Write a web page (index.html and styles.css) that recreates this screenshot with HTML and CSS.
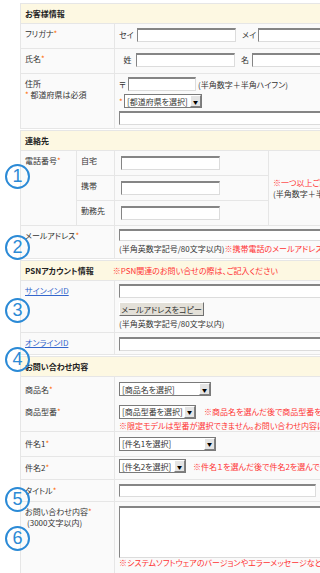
FILE: index.html
```html
<!DOCTYPE html>
<html lang="ja">
<head>
    <meta charset="UTF-8">
    <meta name="viewport" content="width=device-width, initial-scale=1.0">
    <title>お問い合わせフォーム</title>
    <link rel="stylesheet" href="styles.css">
</head>
<body>
<div class="page">

    <table class="form">
        <colgroup><col class="c-label"><col></colgroup>
        <tr class="head"><th colspan="2">お客様情報</th></tr>
        <tr class="r25">
            <td class="label">フリガナ<span class="req">*</span></td>
            <td class="value mid">
                <div class="line">
                    <span class="pre w18">セイ</span><span class="field w99"></span>
                    <span class="pre w16 gap">メイ</span><span class="field w99"></span>
                </div>
            </td>
        </tr>
        <tr class="r25">
            <td class="label">氏名<span class="req">*</span></td>
            <td class="value mid">
                <div class="line">
                    <span class="pre w17 center">姓</span><span class="field w99"></span>
                    <span class="pre w11 gap">名</span><span class="field w99"></span>
                </div>
            </td>
        </tr>
        <tr class="r55">
            <td class="label">住所<br><span class="req">*</span> 都道府県は必須</td>
            <td class="value top">
                <div class="line">
                    <span class="pre w9">〒</span><span class="field w68"></span>
                    <span class="note">(半角数字＋半角ハイフン)</span>
                </div>
                <div class="line">
                    <span class="req pre w5">*</span>
                    <span class="select w78">[都道府県を選択]<span class="arrow">▼</span></span>
                </div>
                <div class="line">
                    <span class="field w260"></span>
                </div>
            </td>
        </tr>
    </table>

    <table class="form">
        <colgroup><col class="c-tel"><col class="c-sub"><col class="c-in"><col></colgroup>
        <tr class="head"><th colspan="4">連絡先</th></tr>
        <tr class="r25">
            <td class="label" rowspan="3">電話番号<span class="req">*</span></td>
            <td class="label">自宅</td>
            <td class="value mid"><span class="field w99 ml2"></span></td>
            <td class="value mid" rowspan="3">
                <span class="red">※一つ以上ご記入ください</span><br>
                (半角数字＋半角ハイフン)
            </td>
        </tr>
        <tr class="r25">
            <td class="label">携帯</td>
            <td class="value mid"><span class="field w99 ml2"></span></td>
        </tr>
        <tr class="r25">
            <td class="label">勤務先</td>
            <td class="value mid"><span class="field w99 ml2"></span></td>
        </tr>
        <tr class="r33">
            <td class="label" colspan="2">メールアドレス<span class="req">*</span></td>
            <td class="value top" colspan="2">
                <div class="line"><span class="field w260 h12"></span></div>
                <div class="line txt">(半角英数字記号/80文字以内) <span class="red">※携帯電話のメールアドレスはご利用いただけません</span></div>
            </td>
        </tr>
    </table>

    <table class="form">
        <colgroup><col class="c-label"><col></colgroup>
        <tr class="head"><th colspan="2">PSNアカウント情報<span class="red head-note">※PSN関連のお問い合せの際は、ご記入ください</span></th></tr>
        <tr class="r52">
            <td class="label"><a href="#" class="link">サインインID</a></td>
            <td class="value top">
                <div class="line"><span class="field w260"></span></div>
                <div class="line"><button class="copy-btn" type="button">メールアドレスをコピー</button></div>
                <div class="line txt">(半角英数字記号/80文字以内)</div>
            </td>
        </tr>
        <tr class="r22">
            <td class="label"><a href="#" class="link">オンラインID</a></td>
            <td class="value mid"><span class="field w260"></span></td>
        </tr>
    </table>

    <table class="form">
        <colgroup><col class="c-label"><col></colgroup>
        <tr class="head"><th colspan="2">お問い合わせ内容</th></tr>
        <tr class="r25 open">
            <td class="label mid">商品名<span class="req">*</span></td>
            <td class="value mid"><span class="select w92">[商品名を選択]<span class="arrow">▼</span></span></td>
        </tr>
        <tr class="r27">
            <td class="label">商品型番<span class="req">*</span></td>
            <td class="value top">
                <div class="line">
                    <span class="select w77">[商品型番を選択]<span class="arrow">▼</span></span>
                    <span class="red ml8">※商品名を選んだ後で商品型番を選んでください</span>
                </div>
                <div class="red sub-note">※限定モデルは型番が選択できません。お問い合わせ内容に記載してください</div>
            </td>
        </tr>
        <tr class="r25 open">
            <td class="label mid">件名1<span class="req">*</span></td>
            <td class="value mid"><span class="select w97">[件名1を選択]<span class="arrow">▼</span></span></td>
        </tr>
        <tr class="r23">
            <td class="label mid">件名2<span class="req">*</span></td>
            <td class="value mid">
                <div class="line">
                    <span class="select w67">[件名2を選択]<span class="arrow">▼</span></span>
                    <span class="red ml7">※件名１を選んだ後で件名2を選んでください</span>
                </div>
            </td>
        </tr>
        <tr class="r22">
            <td class="label mid">タイトル<span class="req">*</span></td>
            <td class="value mid"><span class="field w197 h13"></span></td>
        </tr>
        <tr class="r72">
            <td class="label">お問い合わせ内容<span class="req">*</span><br><span class="limit">(3000文字以内)</span></td>
            <td class="value top">
                <span class="field area"></span>
                <div class="red area-note">※システムソフトウェアのバージョンやエラーメッセージなど、できるだけ詳しくご記入ください</div>
            </td>
        </tr>
    </table>

    <span class="mark m1">1</span>
    <span class="mark m2">2</span>
    <span class="mark m3">3</span>
    <span class="mark m4">4</span>
    <span class="mark m5">5</span>
    <span class="mark m6">6</span>
</div>
</body>
</html>
```

FILE: styles.css
```css
html, body {
    margin: 0;
    overflow: hidden;
    background: #fff;
}
body {
    font-family: "Noto Sans CJK JP", sans-serif;
    font-size: 8px;
    font-feature-settings: "palt";
    color: #333;
}
.page {
    position: relative;
    padding: 3px 0 0 20px;
    width: 440px;
}

/* form tables */
.form {
    width: 440px;
    table-layout: fixed;
    border-collapse: collapse;
    border: 1px solid #e2e2e2;
    margin-bottom: 1px;
    background: #fafafa;
}
.form td, .form th {
    border: 1px solid #e6e6e6;
    padding: 0 4px;
    line-height: 11px;
    white-space: nowrap;
    overflow: hidden;
}
.c-label { width: 94px; }
.c-tel { width: 56px; }
.c-sub { width: 38px; }
.c-in { width: 154px; }

.head th {
    height: 19px;
    background: #fdf8e2;
    text-align: left;
    font-weight: bold;
    color: #222;
}
.head-note {
    font-weight: normal;
    margin-left: 19px;
}
.r22 { height: 22px; }
.r23 { height: 23px; }
.r25 { height: 25px; }
.r27 { height: 27px; }
.r33 { height: 33px; }
.r52 { height: 52px; }
.r55 { height: 55px; }
.r72 { height: 72px; }
.open td { border-bottom: none; }
.r27 td { border-top: none; }

.label {
    vertical-align: top;
    padding-top: 4px !important;
}
.label.mid {
    vertical-align: middle;
    padding-top: 0 !important;
}
.value.mid { vertical-align: middle; }
.value.top {
    vertical-align: top;
    padding-top: 3px !important;
}

.line {
    display: flex;
    align-items: center;
    margin-bottom: 3px;
}
.pre { display: inline-block; flex: none; }
.center { text-align: center; }
.gap { margin-left: 6px; }
.w5 { width: 5px; }
.w9 { width: 9px; }
.w11 { width: 11px; }
.w16 { width: 16px; }
.w17 { width: 17px; }
.w18 { width: 18px; }
.ml2 { margin-left: 2px; }
.ml7 { margin-left: 7px; }
.ml8 { margin-left: 8px; }

.req { color: #f60; }
.red { color: #f33; }
.link { color: #36c; }
.note { margin-left: 2px; }
.txt { margin-top: -1px; }
.limit { margin-left: 2px; }

/* inputs drawn as old style boxes */
.field {
    display: inline-block;
    flex: none;
    height: 14px;
    box-sizing: border-box;
    background: #fff;
    border: 1px solid #dcdcdc;
    border-top: 2px solid #858585;
    border-left: 1px solid #858585;
    vertical-align: middle;
}
.w68 { width: 68px; }
.w99 { width: 99px; }
.w197 { width: 197px; }
.w260 { width: 260px; }
.h12 { height: 12px; }
.h13 { height: 13px; }
.area {
    display: block;
    width: 260px;
    height: 52px;
    margin-top: 1px;
}
.area-note { margin-top: -1px; }
.sub-note { margin-top: -2px; }

.select {
    display: inline-flex;
    flex: none;
    align-items: center;
    height: 14px;
    box-sizing: border-box;
    padding-left: 2px;
    border: 1px solid #7a7a7a;
    background: #fff;
    color: #333;
    overflow: hidden;
}
.select .arrow {
    margin-left: auto;
    width: 11px;
    height: 12px;
    box-sizing: border-box;
    display: flex;
    align-items: center;
    justify-content: center;
    background: #e4e4e4;
    border: 1px solid;
    border-color: #fff #808080 #808080 #fff;
    font-size: 5px;
    color: #000;
}
.w67 { width: 67px; }
.w77 { width: 77px; }
.w78 { width: 78px; }
.w92 { width: 92px; }
.w97 { width: 97px; }

.copy-btn {
    width: 85px;
    height: 14px;
    padding: 0;
    font-family: inherit;
    font-size: 8px;
    font-feature-settings: "palt";
    color: #333;
    background: #e3e0d8;
    border: 1px solid;
    border-color: #fff #707070 #707070 #fff;
    margin-top: 1px;
}

/* numbered callouts over the form */
.mark {
    position: absolute;
    left: 5px;
    width: 25px;
    height: 25px;
    box-sizing: border-box;
    border: 2px solid #2b8ad6;
    border-radius: 50%;
    display: flex;
    align-items: center;
    justify-content: center;
    font-family: "Liberation Sans", sans-serif;
    font-size: 18px;
    color: #2b8ad6;
}
.m1 { top: 164px; }
.m2 { top: 235px; }
.m3 { top: 298px; }
.m4 { top: 347px; }
.m5 { top: 487px; }
.m6 { top: 526px; }
```
